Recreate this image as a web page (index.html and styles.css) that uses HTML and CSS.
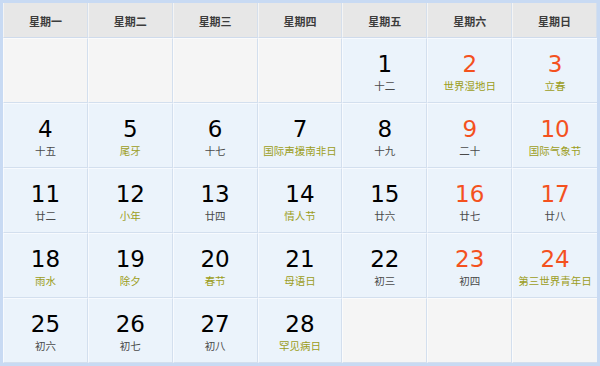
FILE: index.html
```html
<!DOCTYPE html>
<html lang="zh">
<head>
<meta charset="utf-8">
<title>日历</title>
<link rel="stylesheet" href="styles.css">
</head>
<body>
<div class="calendar">
  <div class="head">星期一</div>
  <div class="head">星期二</div>
  <div class="head">星期三</div>
  <div class="head">星期四</div>
  <div class="head">星期五</div>
  <div class="head">星期六</div>
  <div class="head">星期日</div>

  <div class="cell empty"></div>
  <div class="cell empty"></div>
  <div class="cell empty"></div>
  <div class="cell empty"></div>
  <div class="cell"><span class="num">1</span><span class="lunar">十二</span></div>
  <div class="cell"><span class="num red">2</span><span class="lunar fest">世界湿地日</span></div>
  <div class="cell"><span class="num red">3</span><span class="lunar fest">立春</span></div>

  <div class="cell"><span class="num">4</span><span class="lunar">十五</span></div>
  <div class="cell"><span class="num">5</span><span class="lunar fest">尾牙</span></div>
  <div class="cell"><span class="num">6</span><span class="lunar">十七</span></div>
  <div class="cell"><span class="num">7</span><span class="lunar fest">国际声援南非日</span></div>
  <div class="cell"><span class="num">8</span><span class="lunar">十九</span></div>
  <div class="cell"><span class="num red">9</span><span class="lunar">二十</span></div>
  <div class="cell"><span class="num red">10</span><span class="lunar fest">国际气象节</span></div>

  <div class="cell"><span class="num">11</span><span class="lunar">廿二</span></div>
  <div class="cell"><span class="num">12</span><span class="lunar fest">小年</span></div>
  <div class="cell"><span class="num">13</span><span class="lunar">廿四</span></div>
  <div class="cell"><span class="num">14</span><span class="lunar fest">情人节</span></div>
  <div class="cell"><span class="num">15</span><span class="lunar">廿六</span></div>
  <div class="cell"><span class="num red">16</span><span class="lunar">廿七</span></div>
  <div class="cell"><span class="num red">17</span><span class="lunar">廿八</span></div>

  <div class="cell"><span class="num">18</span><span class="lunar fest">雨水</span></div>
  <div class="cell"><span class="num">19</span><span class="lunar fest">除夕</span></div>
  <div class="cell"><span class="num">20</span><span class="lunar fest">春节</span></div>
  <div class="cell"><span class="num">21</span><span class="lunar fest">母语日</span></div>
  <div class="cell"><span class="num">22</span><span class="lunar">初三</span></div>
  <div class="cell"><span class="num red">23</span><span class="lunar">初四</span></div>
  <div class="cell"><span class="num red">24</span><span class="lunar fest">第三世界青年日</span></div>

  <div class="cell"><span class="num">25</span><span class="lunar">初六</span></div>
  <div class="cell"><span class="num">26</span><span class="lunar">初七</span></div>
  <div class="cell"><span class="num">27</span><span class="lunar">初八</span></div>
  <div class="cell"><span class="num">28</span><span class="lunar fest">罕见病日</span></div>
  <div class="cell empty"></div>
  <div class="cell empty"></div>
  <div class="cell empty"></div>
</div>
</body>
</html>
```

FILE: styles.css
```css
html, body {
  margin: 0;
  padding: 0;
  background: #ffffff;
}

.calendar {
  box-sizing: border-box;
  width: 600px;
  height: 366px;
  padding: 3px;
  background: #c8daf3;
  display: grid;
  grid-template-columns: repeat(7, 1fr);
  grid-template-rows: 35px repeat(5, 65px);
  font-family: "DejaVu Sans", "Noto Sans CJK SC", sans-serif;
}

.head {
  box-sizing: border-box;
  background: #e7e7e7;
  border-right: 1px solid #d5dfec;
  border-left: 1px solid #f4f4f4;
  border-bottom: 1px solid #cfdbec;
  display: flex;
  align-items: center;
  justify-content: center;
  font-family: "Noto Sans CJK SC", sans-serif;
  font-weight: 700;
  font-size: 11px;
  color: #3c3c3c;
  padding-top: 1px;
}

.head:last-of-type {
  border-right: none;
}

.cell {
  box-sizing: border-box;
  background: #ebf3fb;
  border-right: 1px solid #d3dfee;
  border-bottom: 1px solid #d3dfee;
  border-left: 1px solid #f7fafe;
  border-top: 1px solid #f7fafe;
  display: flex;
  flex-direction: column;
  align-items: center;
  padding-top: 11px;
}

.cell:nth-child(7n) {
  border-right: none;
}

.cell.empty {
  background: #f5f5f5;
  border-left-color: #fbfbfb;
  border-top-color: #fbfbfb;
}

.num {
  font-size: 23px;
  line-height: 28px;
  color: #000;
}

.num.red {
  color: #f4511e;
}

.lunar {
  font-family: "Noto Sans CJK SC", sans-serif;
  font-size: 10.5px;
  line-height: 14px;
  color: #4a4a4a;
  margin-top: 1px;
}

.lunar.fest {
  color: #9c9d1a;
}
```
